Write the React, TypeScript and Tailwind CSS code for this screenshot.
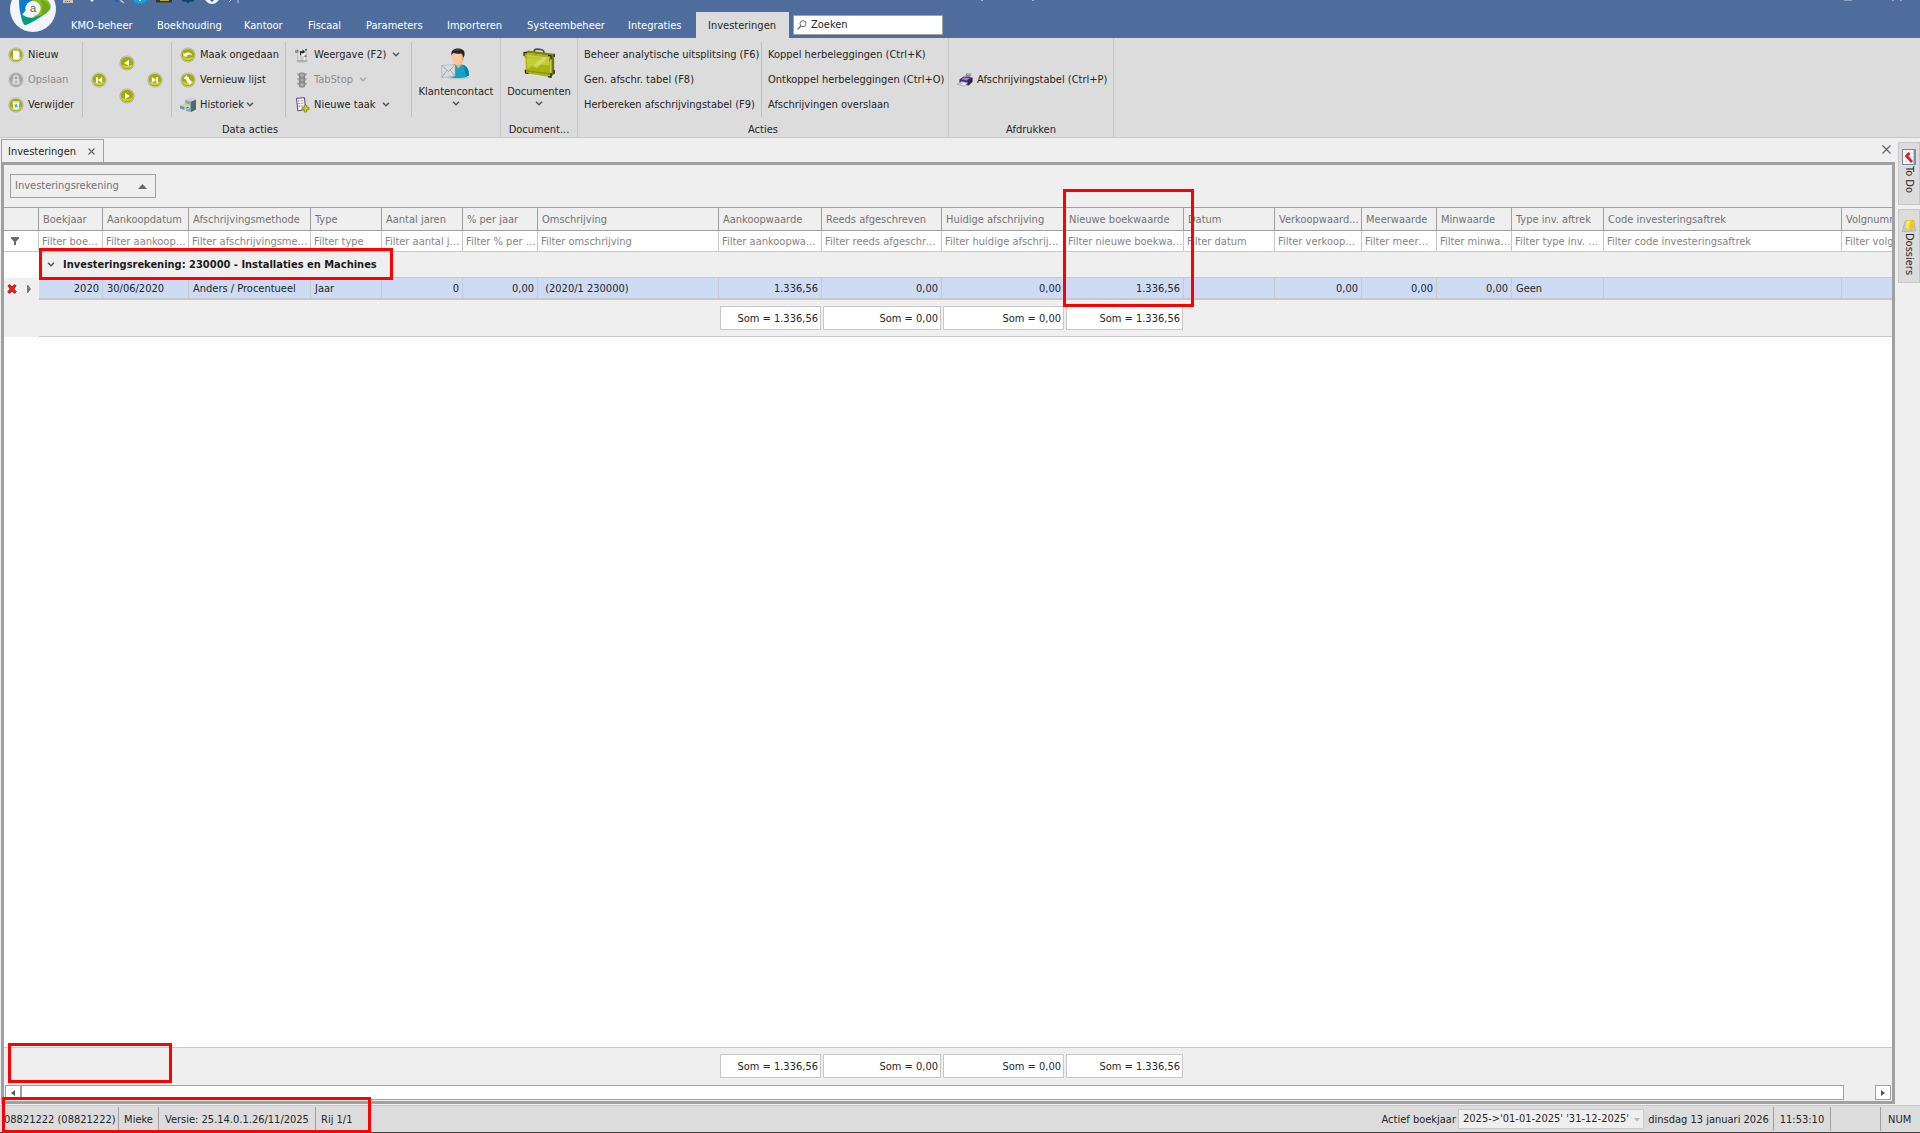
import React, { useState } from "react";

const columns = [
  { title: "Boekjaar", width: "w-[64px]", value: "2020", right: true },
  { title: "Aankoopdatum", width: "w-[86px]", value: "30/06/2020" },
  { title: "Afschrijvingsmethode", width: "w-[122px]", value: "Anders / Procentueel" },
  { title: "Type", width: "w-[71px]", value: "Jaar" },
  { title: "Aantal jaren", width: "w-[81px]", value: "0", right: true },
  { title: "% per jaar", width: "w-[75px]", value: "0,00", right: true },
  { title: "Omschrijving", width: "w-[181px]", value: "\u00a0(2020/1 230000)" },
  { title: "Aankoopwaarde", width: "w-[103px]", value: "1.336,56", right: true, sum: "1.336,56" },
  { title: "Reeds afgeschreven", width: "w-[120px]", value: "0,00", right: true, sum: "0,00" },
  { title: "Huidige afschrijving", width: "w-[123px]", value: "0,00", right: true, sum: "0,00" },
  { title: "Nieuwe boekwaarde", width: "w-[119px]", value: "1.336,56", right: true, sum: "1.336,56" },
  { title: "Datum", width: "w-[91px]", value: "" },
  { title: "Verkoopwaard...", width: "w-[87px]", value: "0,00", right: true },
  { title: "Meerwaarde", width: "w-[75px]", value: "0,00", right: true },
  { title: "Minwaarde", width: "w-[75px]", value: "0,00", right: true },
  { title: "Type inv. aftrek", width: "w-[92px]", value: "Geen" },
  { title: "Code investeringsaftrek", width: "w-[238px]", value: "" },
  { title: "Volgnumm", width: "", value: "", clip: true },
];

const menu = [
  { name: "KMO-beheer", width: "w-[86px]" },
  { name: "Boekhouding", width: "w-[87px]" },
  { name: "Kantoor", width: "w-[64px]" },
  { name: "Fiscaal", width: "w-[58px]" },
  { name: "Parameters", width: "w-[81px]" },
  { name: "Importeren", width: "w-[80px]" },
  { name: "Systeembeheer", width: "w-[101px]" },
  { name: "Integraties", width: "w-[80px]" },
  { name: "Investeringen", width: "w-[93px]" },
];

/* ---------- icons ---------- */

function Orb({ children, disabled }: any) {
  return (
    <svg width="16" height="16" viewBox="0 0 16 16" className="shrink-0" aria-hidden="true">
      <circle cx="8" cy="8" r="7.6" fill={disabled ? "#c2c2c2" : "#a9a9a0"} />
      <circle cx="8" cy="8" r="6.9" fill={disabled ? "#b4b4b4" : "#cfd0b4"} />
      <circle cx="8" cy="8" r="6.3" fill={disabled ? "#a3a3a3" : "#a3ab08"} />
      <path d="M2.4 9.5a6 6 0 0 0 11.2 0A12 12 0 0 1 2.4 9.5z" fill={disabled ? "#b5b5b5" : "#c9d22c"} />
      {children}
    </svg>
  );
}

const NewIcon = () => (
  <Orb>
    <path d="M5 3.500h5l1.500 1.500v7.500H5z" fill="#fdfdf4" />
    <path d="M10 3.500V5h1.500z" fill="#c9cdb0" />
  </Orb>
);

const SaveIcon = () => (
  <Orb disabled>
    <path d="M4.500 7h7v5.500h-7z" fill="#d9d9d9" />
    <path d="M6 7V4.500C6 3.400 10 3.400 10 4.500V7" fill="none" stroke="#dedede" strokeWidth="1.300" />
    <path d="M7.500 8.500h1v2.500h-1z" fill="#8c8c8c" />
  </Orb>
);

const DeleteIcon = () => (
  <Orb>
    <path d="M4.500 4.500h7l-.8 8H5.300z" fill="#e9f5f7" />
    <path d="M4.300 4h7.400v1.400H4.300z" fill="#b5d6dd" />
    <path d="M6.500 7.500l2.500-.6.8 3-2.600.6z" fill="#6cb58f" />
  </Orb>
);

const UndoIcon = () => (
  <Orb>
    <path d="M3.500 9.500V5.800l1.400 1C7 4.800 11 5 12.500 8.600 10.600 7.300 8.400 7.300 6.800 8.400l1.200 1.100z" fill="#fff" />
  </Orb>
);

const RefreshIcon = () => (
  <Orb>
    <path d="M3.600 6L7 3v1.600c2 .8 2 4 .5 6.600C7 9 6.200 7.400 3.600 6z" fill="#fff" />
    <path d="M12.400 10L9 13v-1.600c-2-.8-2-4-.5-6.600C9 7 9.800 8.600 12.400 10z" fill="#fff" />
  </Orb>
);

const FirstIcon = () => (
  <Orb>
    <path d="M5 5h1.700v6H5zM11.200 5v6L6.700 8z" fill="#fff" />
  </Orb>
);

const LastIcon = () => (
  <Orb>
    <path d="M9.300 5H11v6H9.300zM4.800 5v6l4.500-3z" fill="#fff" />
  </Orb>
);

const PrevIcon = () => (
  <Orb>
    <path d="M10 4.800v6.400L5.300 8z" fill="#fff" />
  </Orb>
);

const NextIcon = () => (
  <Orb>
    <path d="M6 4.800v6.400L10.700 8z" fill="#fff" />
  </Orb>
);

const HistoryIcon = () => (
  <svg width="16" height="16" viewBox="0 0 16 16" className="shrink-0" aria-hidden="true">
    <path d="M5 3l7-2 4 1.500v10L11 15l-5-1z" fill="#8fa6ac" />
    <path d="M11 4.500L16 2.500v10L11 15z" fill="#4f6970" />
    <path d="M5 3l7-2 4 1.500-5 2z" fill="#c8d8dc" />
    <path d="M0 8.500l6-2 4 1.300v3.600L4.500 13 0 11.500z" fill="#bcd3da" />
    <path d="M0 8.500l4.500 1.500V13L0 11.500z" fill="#6d99a8" />
    <path d="M1.500 8.200l5-1.600 2 .7-4.600 1.900z" fill="#f0d23c" />
    <path d="M6.500 11l2-.6" stroke="#345" />
  </svg>
);

const ViewIcon = () => (
  <svg width="16" height="16" viewBox="0 0 16 16" className="shrink-0" aria-hidden="true">
    <ellipse cx="8" cy="14.200" rx="5.600" ry="1.400" fill="#b3b3b3" />
    <path d="M4 5h8v8.500H4z" fill="#f6f6f6" stroke="#9a9a9a" strokeWidth=".7" />
    <path d="M5.500 10h5M5.500 12h4" stroke="#8a8a8a" strokeWidth=".8" />
    <path d="M1.500 3h1v3h-1zM3.200 2.400h1v3h-1z" fill="#555" />
    <path d="M6 4.200h2.600V2.600l2.400 2.200-2.400 2.300V5.800H7.300V8.500H6z" fill="#1c1c1c" />
    <circle cx="12" cy="2.800" r="1.100" fill="#555" />
    <path d="M10.500 8.500h2v1.200h-2z" fill="#444" />
  </svg>
);

const TrafficIcon = () => (
  <svg width="16" height="16" viewBox="0 0 16 16" className="shrink-0" aria-hidden="true">
    <path d="M2.600 1.600h10.800l-2 2.600H4.600zM2.600 6.200h10.800l-2 2.600H4.600zM2.600 10.800h10.800l-2 2.600H4.600z" fill="#9b9b9b" />
    <rect x="5" y="0.400" width="6" height="15.200" rx="1.600" fill="#8a8a8a" />
    <circle cx="8" cy="3.200" r="1.700" fill="#b3b3b3" />
    <circle cx="8" cy="8" r="1.700" fill="#a6a6a6" />
    <circle cx="8" cy="12.700" r="1.700" fill="#b3b3b3" />
  </svg>
);

const TaskIcon = () => (
  <svg width="16" height="16" viewBox="0 0 16 16" className="shrink-0" aria-hidden="true">
    <path d="M2.500 1.300l8-.6 1 11.600-7.600 1.600z" fill="#fbfaff" stroke="#5b3c85" />
    <path d="M4.200 4l1-.1M4.500 6.600l1-.1M4.800 9.200l1-.1" stroke="#5b3c85" strokeWidth="1.100" />
    <path d="M6.300 3.900l3-.2M6.500 6.400l3-.3M6.800 9l2.400-.3" stroke="#8b8b9b" strokeWidth=".8" />
    <path d="M10.300 8h2.400v2.300H15v2.400h-2.300V15h-2.400v-2.300H8v-2.400h2.300z" fill="#c6d32b" stroke="#6d7a10" strokeWidth=".7" />
  </svg>
);

const PrinterIcon = () => (
  <svg width="16" height="16" viewBox="0 0 16 16" className="shrink-0" aria-hidden="true">
    <path d="M8 4.500L9.500 1.200h5L13 6z" fill="#8b8b93" />
    <path d="M10.200 2h3.400" stroke="#ddd" strokeWidth=".8" />
    <path d="M2.400 7.600L6.500 4.400 15.400 5.600V9l-4.200 4.600-8.800-2z" fill="#4a2c83" />
    <path d="M11.200 9.200l4.200-3.600V10l-4.200 3.800z" fill="#2b2440" />
    <path d="M4.300 7.300l3-2.100 5.200.8-2.600 2.400z" fill="#9a83c9" />
    <path d="M.3 12.200l4.400-2.600 6 1.200-3.200 3.400z" fill="#f1f1f1" stroke="#7e8a90" strokeWidth=".6" />
    <path d="M3 12.200l3-1.400" stroke="#6fa8b0" strokeWidth=".7" />
  </svg>
);

const ContactIcon = () => (
  <svg width="30" height="32" viewBox="0 0 30 32" aria-hidden="true">
    <ellipse cx="17" cy="29.500" rx="11" ry="1.800" fill="#c3c3c3" />
    <path d="M8.500 28.500c0-7 2.500-11.500 5.500-12h7c5 .8 7 5 7 11-4 3-15 3.500-19.500 1z" fill="#14a3c7" />
    <path d="M22 17c3.500 1 6 5 6 10.500l-4 1.500c.5-4.500 0-8.500-2-12z" fill="#0b7f9f" />
    <path d="M14 16.500l3.500 4 3.500-4-1-2.500h-5z" fill="#e9a873" />
    <path d="M11 7c0-4.500 12-4.500 12 0 .3 5-2.500 10-6 10s-6-5-6-10z" fill="#f8c79c" />
    <path d="M19 5c2.500 2.500 2 8 .5 10.600C22 13.500 23.300 10 23 7z" fill="#e9a873" />
    <path d="M10.500 7.500C9.800 2.500 12.500.5 17 .5s7.300 2 6.500 7l-1.200 2.200c-.3-2.700-1-3.700-2.300-4.200-2.500.5-5.500.3-7.500-.5-.9.700-1.300 1.200-2 2.500z" fill="#28211f" />
    <path d="M13 2.200c2.500-1 5.500-1 7.500-.2-2 .2-4.500.8-7.500.2z" fill="#6e6764" />
    <path d="M.5 17.500l13.500-1v11.500L.9 29.800z" fill="#d9dce0" stroke="#a7abb0" strokeWidth=".6" />
    <path d="M.6 17.600l7 6 6.300-7M.9 29.600l5-7.400M13.800 27.800l-4.800-6" fill="none" stroke="#95999e" strokeWidth=".8" />
  </svg>
);

const BriefcaseIcon = () => (
  <svg width="32" height="32" viewBox="0 0 32 32" aria-hidden="true">
    <path d="M11 4c0-3 2-3 5.500-2.700C19.500 1.500 21 2 21 5" fill="none" stroke="#4b4b45" strokeWidth="1.800" />
    <path d="M1.500 4.500L5 2.500l26 3.200L28 8z" fill="#7c8318" />
    <path d="M1 4.500l27 3.300v21.400L2.500 25z" fill="#a9b413" />
    <path d="M28 7.800l3.200-2.100v20.100L28 29.200z" fill="#70770f" />
    <path d="M1.600 8l26.400 3v1.800L1.700 9.800zM2.300 22L28 25.300v1.500L2.400 23.500z" fill="#8b9410" />
    <path d="M3.500 6.800l22.500 2.700v8C17 15.500 9 17 4.300 21z" fill="#ccd545" opacity=".75" />
    <path d="M10 18L20 9l5 .5L14 20z" fill="#e6eba0" opacity=".5" />
    <path d="M1 8V4.500l3 .4M25 7.400l3 .4V11M2.300 21.500l.2 3.500 3 .5M25 28.700l3 .5V25M31.200 9V5.700M31.200 22v3.800" fill="none" stroke="#24241f" strokeWidth="1.200" />
    <path d="M1.800 8.500l.6 13M28 11.500V25" stroke="#f1f3d4" strokeWidth=".8" />
  </svg>
);

function Logo() {
  return (
    <svg width="46" height="32" viewBox="0 14 46 32" className="absolute left-[10px] top-0" aria-hidden="true">
      <circle cx="23" cy="23" r="23" fill="#f2f6fc" />
      <path d="M11 4c9 0 22 5 28 12 2.500 3 2 6-.5 9-3 3.500-8 6.500-13 8l-3-5 7-5-6-7z" fill="#86bc25" />
      <path d="M30 13c5 2 9 5 10.500 9-1 3-5 6-9.500 8 2-6 2-12-1-17z" fill="#6fa71c" />
      <path d="M11 4c3 0 9 3 13 7l-8 13-5 6C8.500 22 8.500 10 11 4z" fill="#0a7bc4" />
      <path d="M10.800 27c4 5 12 6 17 3l4.500-.5C26 34.500 19 38 14.500 39.200c-2.500-3-3.700-8-3.700-12.200z" fill="#049a80" />
      <circle cx="23" cy="22.500" r="7.600" fill="#f4f6f6" />
      <text x="23" y="26" textAnchor="middle" fontSize="11" fill="#5a5a5a" fontFamily="Liberation Sans, sans-serif">
        a
      </text>
    </svg>
  );
}

/* lower edge of the quick access toolbar, cut off by the window */
function QuickAccess() {
  return (
    <svg width="190" height="5" viewBox="0 0 190 5" className="absolute left-[60px] top-0" aria-hidden="true">
      <path d="M3 0h10v3H3z" fill="#c9c4b6" />
      <path d="M5 1h1v1H5zM7 1h1v1H7zM9 1h1v1H9z" fill="#77736a" />
      <path d="M30 0h4l-2 2z" fill="#dfe9fb" />
      <path d="M54 0h4l1 2h-3z" fill="#1f5fc4" />
      <path d="M60 0l4 3" stroke="#b9c1cc" strokeWidth="1.500" />
      <circle cx="80" cy="-4" r="8" fill="#149fe0" />
      <path d="M79 0h2v1h-2z" fill="#fff" />
      <path d="M96 0h16v2.500H96z" fill="#383520" />
      <path d="M100 0h9v1h-9z" fill="#b6a93c" />
      <path d="M122 0h12v1.500h-4l-2 2-2-2h-4z" fill="#0d4567" />
      <circle cx="152" cy="-3.500" r="7.500" fill="#eef2fa" />
      <path d="M150 0h4l-2 2z" fill="#3a62b5" />
      <path d="M171 0l-2 2M178 0v3" stroke="#b7c5de" />
    </svg>
  );
}

function Chevron({ disabled }: any) {
  return (
    <svg width="8" height="5" viewBox="0 0 8 5" className="shrink-0" aria-hidden="true">
      <path d="M1 .8l3 3 3-3" fill="none" stroke={disabled ? "#a8a8a8" : "#555"} strokeWidth="1.500" />
    </svg>
  );
}

/* ---------- ribbon ---------- */

function RibbonButton({ icon, label, arrow, disabled }: any) {
  return (
    <button
      disabled={disabled}
      className="flex h-[25px] items-center whitespace-nowrap text-[#262626] disabled:text-[#8c8c8c]"
    >
      {icon}
      <span className={icon ? "ml-1" : ""}>{label}</span>
      {arrow ? (
        <span className={arrow === "near" ? "ml-[2px]" : "ml-[6px]"}>
          <Chevron disabled={disabled} />
        </span>
      ) : null}
    </button>
  );
}

function BigButton({ icon, label }: any) {
  return (
    <button className="flex h-[75px] w-full flex-col items-center pt-[6px] text-[#262626]">
      {icon}
      <span className="mt-1 leading-[15px]">{label}</span>
      <span className="mt-[2px]">
        <Chevron />
      </span>
    </button>
  );
}

function RibbonGroup({ title, className, children }: any) {
  return (
    <section className={`flex shrink-0 flex-col border-r border-[#c8c8c8] pt-1 ${className}`}>
      <div className="flex h-[75px]">{children}</div>
      <h2 className="h-[20px] text-center leading-[26px]">{title}</h2>
    </section>
  );
}

function Ribbon() {
  return (
    <div className="flex h-[100px] overflow-hidden border-b border-[#c8c8c8] bg-[#dcdcdc]">
      <RibbonGroup title="Data acties" className="w-[501px]">
        <div className="w-[83px] border-r border-[#c0c0c0] pl-2">
          <RibbonButton icon={<NewIcon />} label="Nieuw" />
          <RibbonButton icon={<SaveIcon />} label="Opslaan" disabled />
          <RibbonButton icon={<DeleteIcon />} label="Verwijder" />
        </div>
        <div className="grid w-[89px] grid-cols-[16px_16px_16px] items-center justify-center gap-x-3 border-r border-[#c0c0c0]">
          <button aria-label="Eerste">
            <FirstIcon />
          </button>
          <div className="flex flex-col gap-[17px]">
            <button aria-label="Vorige">
              <PrevIcon />
            </button>
            <button aria-label="Volgende">
              <NextIcon />
            </button>
          </div>
          <button aria-label="Laatste">
            <LastIcon />
          </button>
        </div>
        <div className="w-[114px] border-r border-[#c0c0c0] pl-2">
          <RibbonButton icon={<UndoIcon />} label="Maak ongedaan" />
          <RibbonButton icon={<RefreshIcon />} label="Vernieuw lijst" />
          <RibbonButton icon={<HistoryIcon />} label="Historiek" arrow="near" />
        </div>
        <div className="w-[126px] border-r border-[#c0c0c0] pl-2">
          <RibbonButton icon={<ViewIcon />} label="Weergave (F2)" arrow="far" />
          <RibbonButton icon={<TrafficIcon />} label="TabStop" arrow="far" disabled />
          <RibbonButton icon={<TaskIcon />} label="Nieuwe taak" arrow="far" />
        </div>
        <div className="flex-1">
          <BigButton icon={<ContactIcon />} label="Klantencontact" />
        </div>
      </RibbonGroup>
      <RibbonGroup title="Document..." className="w-[77px]">
        <BigButton icon={<BriefcaseIcon />} label="Documenten" />
      </RibbonGroup>
      <RibbonGroup title="Acties" className="w-[371px]">
        <div className="w-[184px] border-r border-[#c0c0c0] pl-[6px]">
          <RibbonButton label="Beheer analytische uitsplitsing (F6)" />
          <RibbonButton label="Gen. afschr. tabel (F8)" />
          <RibbonButton label="Herbereken afschrijvingstabel (F9)" />
        </div>
        <div className="pl-[6px]">
          <RibbonButton label="Koppel herbeleggingen (Ctrl+K)" />
          <RibbonButton label="Ontkoppel herbeleggingen (Ctrl+O)" />
          <RibbonButton label="Afschrijvingen overslaan" />
        </div>
      </RibbonGroup>
      <RibbonGroup title="Afdrukken" className="w-[165px]">
        <div className="flex items-center pl-2">
          <RibbonButton icon={<PrinterIcon />} label="Afschrijvingstabel (Ctrl+P)" />
        </div>
      </RibbonGroup>
    </div>
  );
}

function TitleBar() {
  const [search, setSearch] = useState<string>("Zoeken");

  return (
    <header className="relative flex h-[38px] items-end overflow-hidden bg-[#4f6d9c] pl-[59px]">
      <Logo />
      <QuickAccess />
      <svg width="60" height="2" className="absolute left-[980px] top-0" aria-hidden="true">
        <path d="M1 0h2v1H1zM52 0h2v1h-2z" fill="#a9bad6" />
      </svg>
      <svg width="60" height="1" className="absolute right-[17px] top-0" aria-hidden="true">
        <path d="M1 0h8v1H1zM49 0h2v1h-2zM57 0h2v1h-2z" fill="#93a6c6" />
      </svg>
      <nav className="flex">
        {menu.map((item) => (
          <button
            key={item.name}
            className={`h-[26px] shrink-0 pl-3 pt-0.5 text-left ${item.width} ${
              item.name === "Investeringen" ? "bg-[#dcdcdc] text-[#262626]" : "text-white"
            }`}
          >
            {item.name}
          </button>
        ))}
      </nav>
      <label className="mb-[3px] ml-1 flex h-[20px] w-[150px] shrink-0 items-center border border-[#a0a0a0] bg-white pl-[3px]">
        <svg width="10" height="10" viewBox="0 0 10 10" className="shrink-0" aria-hidden="true">
          <circle cx="6" cy="3.700" r="3" fill="none" stroke="#6b6b6b" />
          <path d="M3.800 6L.6 9.400" stroke="#6b6b6b" strokeWidth="1.300" />
        </svg>
        <input
          aria-label="Zoeken"
          className="ml-1 w-full min-w-0 text-[#262626] outline-none"
          value={search}
          onChange={(e) => setSearch(e.target.value)}
        />
      </label>
    </header>
  );
}

/* ---------- grid ---------- */

function GridColumns() {
  return (
    <colgroup>
      <col className="w-[35px]" />
      {columns.map((c) => (
        <col key={c.title} className={c.width} />
      ))}
    </colgroup>
  );
}

function SumCell({ sum }: any) {
  return (
    <td className="h-[36px] p-0">
      {sum ? (
        <div className="mx-px flex h-[24px] items-center justify-end border border-[#c8c8c8] bg-white pr-[2px] pt-px">
          Som = {sum}
        </div>
      ) : null}
    </td>
  );
}

function InvestmentGrid() {
  return (
    <table className="w-full table-fixed border-separate border-spacing-0 text-left">
      <GridColumns />
      <thead>
        <tr className="text-[#737373]">
          <td className="h-[24px] border-y border-r border-[#a0a0a0] p-0" />
          {columns.map((c) => (
            <th
              key={c.title}
              scope="col"
              className={`h-[24px] overflow-hidden whitespace-nowrap border-y border-[#a0a0a0] pb-0 pl-1 pr-0 pt-0.5 font-normal ${
                c.clip ? "" : "border-r"
              }`}
            >
              {c.title}
            </th>
          ))}
        </tr>
        <tr className="bg-white">
          <td className="h-[21px] border-b border-r border-[#c8c8c8] p-0">
            <svg width="10" height="9" viewBox="0 0 10 9" className="ml-[6px]" aria-hidden="true">
              <path d="M1 0h8v1.500L6 4.500V8H4V4.500L1 1.500z" fill="#6b6b6b" />
            </svg>
          </td>
          {columns.map((c) => (
            <td
              key={c.title}
              className={`h-[21px] border-b border-[#c8c8c8] py-0 pl-[3px] pr-0 ${c.clip ? "" : "border-r"}`}
            >
              <input
                aria-label={`Filter ${c.title}`}
                placeholder={`Filter ${c.title.toLowerCase()}`}
                className={`block h-[18px] w-full bg-transparent outline-none placeholder:text-[#858585] ${
                  c.clip ? "text-clip" : "text-ellipsis"
                }`}
              />
            </td>
          ))}
        </tr>
      </thead>
      <tbody>
        <tr>
          <td className="h-[26px] bg-white p-0" />
          <td colSpan={18} className="relative h-[26px] border-b border-[#c8c8c8] p-0 pl-2">
            <button className="flex items-center gap-2 font-bold text-[#1c1c1c]">
              <Chevron />
              Investeringsrekening: 230000 - Installaties en Machines
            </button>
            <div className="pointer-events-none absolute -top-1 left-0 h-[32px] w-[354px] border-3 border-[#ff0000]" />
          </td>
        </tr>
        <tr>
          <td className="h-[22px] p-0">
            <div className="flex items-center gap-[10px] pl-[3px]">
              <svg width="10" height="10" viewBox="0 0 10 10" aria-hidden="true">
                <path d="M1 1.500l2-.8L5 3 7.200.7l1.900.9L6.900 5l2.400 2.800L7.500 9.400 5 7 2.600 9.400.7 8 3 5z" fill="#f02018" stroke="#a00c08" strokeWidth=".8" />
              </svg>
              <svg width="4" height="8" viewBox="0 0 4 8" aria-hidden="true">
                <path d="M0 0h1l3 4-3 4H0z" fill="#777" />
              </svg>
            </div>
          </td>
          {columns.map((c) => (
            <td
              key={c.title}
              className={`h-[22px] whitespace-nowrap border-b-2 border-[#c8c8c8] bg-[#cddbf5] pb-0 pl-1 pr-[3px] pt-0.5 ${
                c.right ? "text-right" : ""
              } ${c.clip ? "" : "border-r"}`}
            >
              {c.value}
            </td>
          ))}
        </tr>
        <tr>
          <td className="p-0" />
          {columns.map((c) => (
            <SumCell key={c.title} sum={c.sum} />
          ))}
        </tr>
        <tr>
          <td className="h-px p-0" />
          <td colSpan={18} className="h-px bg-[#c8c8c8] p-0" />
        </tr>
      </tbody>
    </table>
  );
}

function GridTotals() {
  return (
    <div className="relative border-t border-[#c8c8c8]">
      <table aria-label="Totalen" className="w-full table-fixed border-separate border-spacing-0">
        <GridColumns />
        <tbody>
          <tr>
            <td className="p-0" />
            {columns.map((c) => (
              <SumCell key={c.title} sum={c.sum} />
            ))}
          </tr>
        </tbody>
      </table>
      <div className="pointer-events-none absolute -top-[5px] left-1 h-[40px] w-[164px] border-3 border-[#ff0000]" />
    </div>
  );
}

function ScrollBar() {
  return (
    <div className="mx-px mb-px mt-px flex h-[15px]">
      <button aria-label="Naar links" className="flex w-[16px] items-center justify-center border border-[#a0a0a0] bg-white">
        <svg width="4" height="6" viewBox="0 0 4 6" aria-hidden="true">
          <path d="M4 0v6L0 3z" fill="#555" />
        </svg>
      </button>
      <div className="flex-1 border border-[#a0a0a0] bg-white" />
      <button
        aria-label="Naar rechts"
        className="ml-[31px] flex w-[16px] items-center justify-center border border-[#a0a0a0] bg-white"
      >
        <svg width="4" height="6" viewBox="0 0 4 6" aria-hidden="true">
          <path d="M0 0v6l4-3z" fill="#555" />
        </svg>
      </button>
    </div>
  );
}

/* ---------- page ---------- */

function DockTab({ icon, label, className }: any) {
  return (
    <button
      className={`flex w-full flex-col items-center border border-[#c8c8c8] bg-[#dcdcdc] text-[#262626] ${className}`}
    >
      {icon}
      <span className="mt-px leading-4 [writing-mode:vertical-rl]">{label}</span>
    </button>
  );
}

function Dock() {
  return (
    <aside className="flex w-[25px] shrink-0 flex-col gap-1 pl-[3px] pt-1">
      <DockTab
        label="To Do"
        className="h-[63px] pt-[6px]"
        icon={
          <svg width="14" height="16" viewBox="0 0 14 16" aria-hidden="true">
            <path d="M.5.500h13v15H.5z" fill="#fff" stroke="#7486a6" />
            <path d="M1 4h12M1 8h12M1 12h12M4 1v14M8 1v14" stroke="#ccd6e6" strokeWidth=".7" />
            <path d="M11.500 1h2v14h-2z" fill="#8194b5" />
            <path d="M7.500 4L4.500 7l5.500 6" fill="none" stroke="#dc1f1f" strokeWidth="2.600" />
          </svg>
        }
      />
      <DockTab
        label="Dossiers"
        className="h-[74px] pt-2"
        icon={
          <svg width="14" height="14" viewBox="0 0 14 14" aria-hidden="true">
            <path d="M3 3l9-.5 1.500 10.500-13 .5z" fill="#c5cbd0" stroke="#9aa1a6" strokeWidth=".6" />
            <path d="M3.500 3L11 1.500l1 8.500-4.500 2.500-4-1.500z" fill="#f6c812" />
            <path d="M4.500 3.500l3.500-.7L7 11l-3-1z" fill="#fdea7a" />
          </svg>
        }
      />
    </aside>
  );
}

function StatusBar() {
  return (
    <footer className="relative mt-px flex h-[28px] items-stretch whitespace-nowrap border-b border-t border-b-[#404040] border-t-[#c8c8c8] bg-[#dcdcdc]">
      <div className="my-px flex flex-1 leading-[26px]">
        <span className="w-[119px] border-r border-[#a0a0a0] pl-1">08821222 (08821222)</span>
        <span className="w-[40px] border-r border-[#a0a0a0] text-center">Mieke</span>
        <span className="w-[157px] border-r border-[#a0a0a0] pl-[6px]">Versie: 25.14.0.1.26/11/2025</span>
        <span className="pl-[5px]">Rij 1/1</span>
      </div>
      <div className="my-px flex leading-[26px]">
        <label htmlFor="boekjaar" className="mr-[2px]">
          Actief boekjaar
        </label>
        <div className="relative flex pt-[2px]">
          <select
            id="boekjaar"
            className="h-[20px] w-[186px] appearance-none border border-[#c8c8c8] bg-[#efefef] pl-1 leading-[18px] outline-none"
          >
            <option>{"2025->'01-01-2025' '31-12-2025'"}</option>
          </select>
          <svg width="6" height="4" viewBox="0 0 6 4" className="pointer-events-none absolute right-1 top-[11px]" aria-hidden="true">
            <path d="M0 0h6L3 3.500z" fill="#b5b5b5" />
          </svg>
        </div>
        <span className="w-[130px] border-r border-[#a0a0a0] text-center">dinsdag 13 januari 2026</span>
        <span className="w-[57px] border-r border-[#a0a0a0] text-center">11:53:10</span>
        <span className="w-[50px] border-r border-[#a0a0a0]" />
        <span className="w-[39px] pl-[7px]">NUM</span>
      </div>
      <div className="pointer-events-none absolute -bottom-px -top-[9px] left-[2px] w-[369px] border-3 border-[#ff0000]" />
    </footer>
  );
}

function App() {
  return (
    <div className="flex min-h-screen flex-col overflow-hidden bg-[#efefef] font-['DejaVu_Sans_Condensed','DejaVu_Sans',sans-serif] text-[11px] leading-4 text-[#262626]">
      <TitleBar />
      <Ribbon />
      <div className="flex flex-1">
        <main className="flex min-w-0 flex-1 flex-col">
          <div className="flex h-[24px] items-end justify-between pl-px">
            <div className="flex h-[23px] w-[103px] items-center justify-between border border-b-0 border-[#a0a0a0] pl-[6px] pr-2 pt-px">
              Investeringen
              <button aria-label="Tabblad sluiten">
                <svg width="7" height="7" viewBox="0 0 7 7" aria-hidden="true">
                  <path d="M.5.500l6 6M6.500.500l-6 6" stroke="#666" strokeWidth="1.200" />
                </svg>
              </button>
            </div>
            <button aria-label="Sluiten" className="mb-2 mr-1">
              <svg width="9" height="9" viewBox="0 0 9 9" aria-hidden="true">
                <path d="M.5.500l8 8M8.500.500l-8 8" stroke="#666" strokeWidth="1.200" />
              </svg>
            </button>
          </div>
          <div className="relative ml-px flex flex-1 flex-col border-3 border-[#a0a0a0]">
            <div className="h-[42px] pl-[6px] pt-[9px]">
              <button className="flex h-[24px] w-[146px] items-center justify-between border border-[#a0a0a0] pl-1 pr-2 text-[#737373]">
                Investeringsrekening
                <svg width="9" height="5" viewBox="0 0 9 5" aria-hidden="true">
                  <path d="M0 5h9L4.500 0z" fill="#6b6b6b" />
                </svg>
              </button>
            </div>
            <InvestmentGrid />
            <div className="flex-1 bg-white" />
            <GridTotals />
            <ScrollBar />
            <div className="pointer-events-none absolute left-[1059px] top-[24px] h-[118px] w-[131px] border-3 border-[#ff0000]" />
          </div>
        </main>
        <Dock />
      </div>
      <StatusBar />
    </div>
  );
}

export default App;
